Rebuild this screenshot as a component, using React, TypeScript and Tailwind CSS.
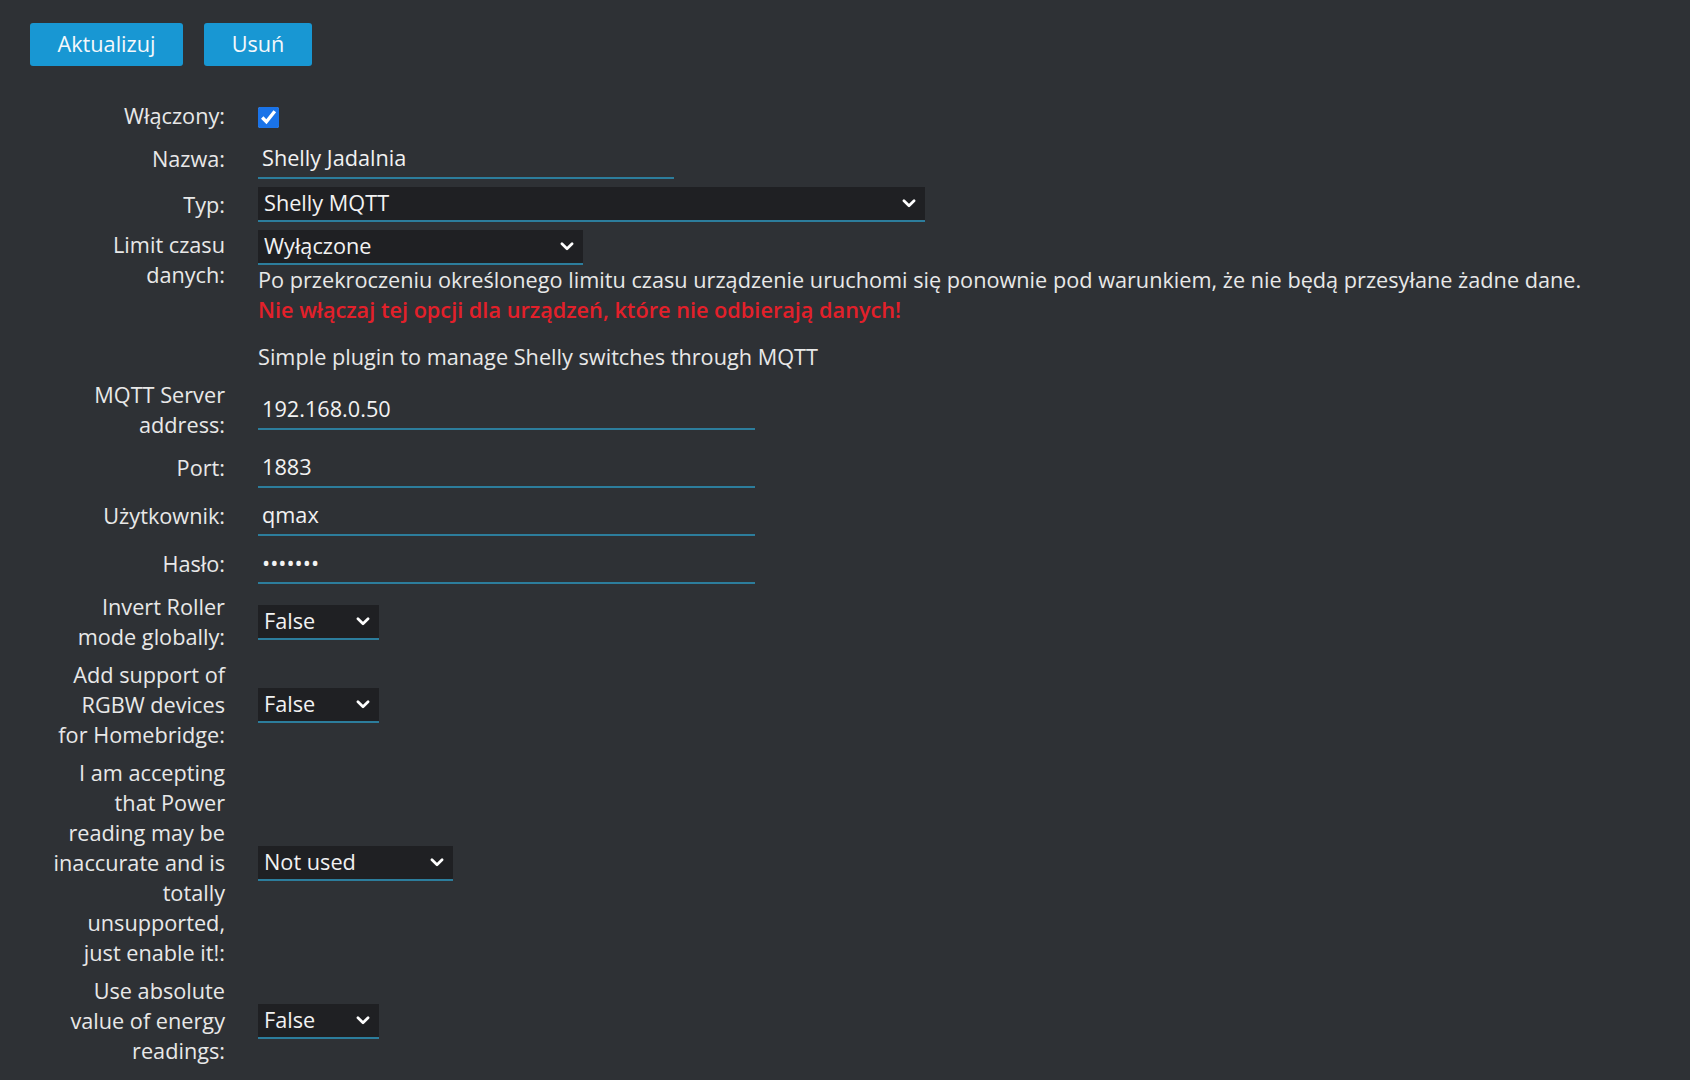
import { ReactNode } from 'react';

function Chevron() {
  return (
    <svg viewBox="0 0 12 8" className="w-[14px] h-[9px] pointer-events-none" fill="none" stroke="#ffffff" strokeWidth="2.4" strokeLinecap="round" strokeLinejoin="round">
      <path d="M1.5 1.5 6 6l4.5-4.5" />
    </svg>
  );
}

function Select({ value, width, options }: { value: string; width: string; options: string[] }) {
  return (
    <div className={`relative ${width} h-[35px]`}>
      <select
        defaultValue={value}
        className="appearance-none w-full h-full bg-[#1f2023] text-[#f2f2f2] text-[21.7px] pl-[6px] pr-[30px] border-0 border-b-2 border-[#2c7d9c] outline-none"
      >
        {options.map((o) => <option key={o} value={o}>{o}</option>)}
      </select>
      <div className="absolute right-[9px] top-0 bottom-[2px] flex items-center">
        <Chevron />
      </div>
    </div>
  );
}

function TextInput({ value, width, type = 'text' }: { value: string; width: string; type?: string }) {
  return (
    <input
      type={type}
      defaultValue={value}
      className={`${width} h-[40px] bg-transparent text-[#f2f2f2] text-[21.7px] pl-[4px] pb-[2px] border-0 border-b-2 border-[#2c7d9c] outline-none`}
    />
  );
}

function Row({ label, children, top = false }: { label: ReactNode; children: ReactNode; top?: boolean }) {
  return (
    <div className={`flex gap-[33px] ${top ? 'items-start' : 'items-center'}`}>
      <div className="w-[195px] shrink-0 text-right leading-[30px] whitespace-nowrap">{label}</div>
      <div>{children}</div>
    </div>
  );
}

export default function App() {
  const bool = ['False', 'True'];
  return (
    <div className="min-h-screen bg-[#2e3135] text-[#e8e8e8] text-[21.7px] pt-[23px] pl-[30px] font-['Open_Sans',sans-serif]">
      <div className="flex gap-[21px]">
        <button className="w-[153px] h-[43px] rounded-[3px] bg-[#1897d3] text-[#f4f8fb] text-[21.7px]">Aktualizuj</button>
        <button className="w-[108px] h-[43px] rounded-[3px] bg-[#1897d3] text-[#f4f8fb] text-[21.7px]">Usuń</button>
      </div>

      <div className="mt-[35px] flex flex-col gap-[8px]">
        <Row label="Włączony:">
          <input type="checkbox" defaultChecked className="w-[21px] h-[21px] mt-[3px] accent-[#1a73e8] block" />
        </Row>
        <Row label="Nazwa:">
          <TextInput value="Shelly Jadalnia" width="w-[416px]" />
        </Row>
        <Row label="Typ:">
          <Select value="Shelly MQTT" width="w-[667px]" options={['Shelly MQTT']} />
        </Row>
        <Row top label={<>Limit czasu<br />danych:</>}>
          <Select value="Wyłączone" width="w-[325px]" options={['Wyłączone']} />
          <div className="leading-[30px] whitespace-nowrap">
            Po przekroczeniu określonego limitu czasu urządzenie uruchomi się ponownie pod warunkiem, że nie będą przesyłane żadne dane.
          </div>
          <div className="leading-[30px] font-semibold text-[#e3202a] mb-[9px]">
            Nie włączaj tej opcji dla urządzeń, które nie odbierają danych!
          </div>
        </Row>
        <Row label="">
          <div className="leading-[30px]">Simple plugin to manage Shelly switches through MQTT</div>
        </Row>
        <Row label={<>MQTT Server<br />address:</>}>
          <TextInput value="192.168.0.50" width="w-[497px]" />
        </Row>
        <Row label="Port:">
          <TextInput value="1883" width="w-[497px]" />
        </Row>
        <Row label="Użytkownik:">
          <TextInput value="qmax" width="w-[497px]" />
        </Row>
        <Row label="Hasło:">
          <TextInput value="1234567" type="password" width="w-[497px]" />
        </Row>
        <Row label={<>Invert Roller<br />mode globally:</>}>
          <Select value="False" width="w-[121px]" options={bool} />
        </Row>
        <Row label={<>Add support of<br />RGBW devices<br />for Homebridge:</>}>
          <Select value="False" width="w-[121px]" options={bool} />
        </Row>
        <Row label={<>I am accepting<br />that Power<br />reading may be<br />inaccurate and is<br />totally<br />unsupported,<br />just enable it!:</>}>
          <Select value="Not used" width="w-[195px]" options={['Not used', 'Enabled']} />
        </Row>
        <Row label={<>Use absolute<br />value of energy<br />readings:</>}>
          <Select value="False" width="w-[121px]" options={bool} />
        </Row>
      </div>
    </div>
  );
}
